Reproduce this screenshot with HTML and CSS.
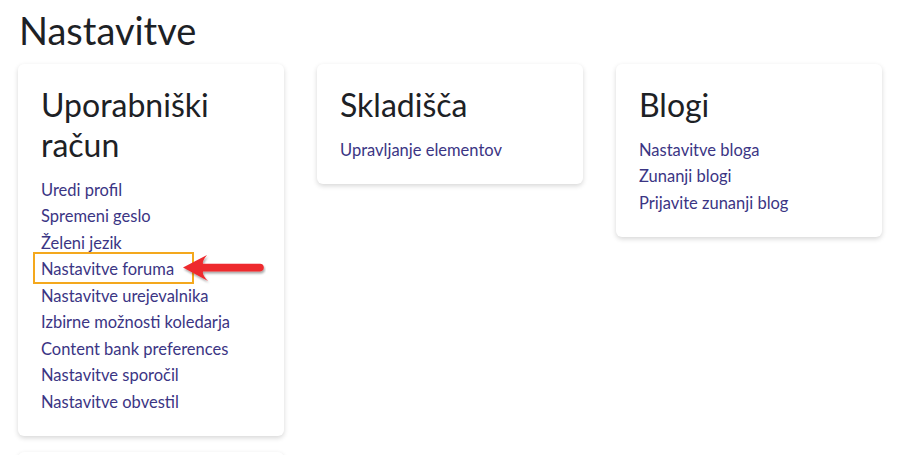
FILE: index.html
```html
<!DOCTYPE html>
<html lang="sl">
<head>
    <meta charset="UTF-8">
    <meta name="viewport" content="width=device-width, initial-scale=1.0">
    <title>Nastavitve</title>
    <link rel="stylesheet" href="styles.css">
</head>
<body>
    <h1 class="page-title">Nastavitve</h1>

    <div class="card-grid">
        <div class="card">
            <h3>Uporabniški račun</h3>
            <ul class="links">
                <li><a href="#">Uredi profil</a></li>
                <li><a href="#">Spremeni geslo</a></li>
                <li><a href="#">Želeni jezik</a></li>
                <li class="marked">
                    <a href="#">Nastavitve foruma</a>
                    <span class="mark-box"></span>
                    <svg class="mark-arrow" width="84" height="32" viewBox="0 0 84 32">
                        <defs>
                            <filter id="arrow-shadow" x="-10%" y="-30%" width="130%" height="180%">
                                <feDropShadow dx="1" dy="2" stdDeviation="1.2" flood-color="#000" flood-opacity="0.35"/>
                            </filter>
                        </defs>
                        <path d="M1 14.5 L25 2 Q20 8 21 10.8 L78 10.8 A3.8 3.8 0 0 1 78 18.4 L21 18.4 Q20 22 26 28 Z" fill="#ee2a2e" filter="url(#arrow-shadow)"/>
                    </svg>
                </li>
                <li><a href="#">Nastavitve urejevalnika</a></li>
                <li><a href="#">Izbirne možnosti koledarja</a></li>
                <li><a href="#">Content bank preferences</a></li>
                <li><a href="#">Nastavitve sporočil</a></li>
                <li><a href="#">Nastavitve obvestil</a></li>
            </ul>
        </div>

        <div class="card">
            <h3>Skladišča</h3>
            <ul class="links">
                <li><a href="#">Upravljanje elementov</a></li>
            </ul>
        </div>

        <div class="card">
            <h3>Blogi</h3>
            <ul class="links">
                <li><a href="#">Nastavitve bloga</a></li>
                <li><a href="#">Zunanji blogi</a></li>
                <li><a href="#">Prijavite zunanji blog</a></li>
            </ul>
        </div>

        <!-- naslednja kartica, vidi se samo zgornji rob -->
        <div class="card card-next"></div>
    </div>
</body>
</html>
```

FILE: styles.css
```css
body {
    font-family: Lato, "Liberation Sans", sans-serif;
    background-color: #fff;
    color: #1d2125;
    margin: 0;
    padding: 8px 18px;
}

.page-title {
    font-size: 38px;
    font-weight: 400;
    line-height: 1.2;
    margin: 0 0 10px 1px;
}

.card-grid {
    display: grid;
    grid-template-columns: repeat(3, 266px);
    column-gap: 33px;
    row-gap: 16px;
    align-items: start;
}

.card {
    background: #fff;
    border-radius: 6px;
    box-shadow: 0 2px 5px rgba(0, 0, 0, 0.16);
    padding: 21px 22px 21px 23px;
}

.card h3 {
    font-size: 32px;
    font-weight: 400;
    line-height: 40px;
    margin: 0 0 12px 0;
}

.card-next {
    height: 60px;
}

.links {
    list-style: none;
    margin: 0;
    padding: 0;
}

.links li {
    font-size: 16.5px;
    line-height: 26.5px;
}

.links a {
    color: #3b3584;
    text-decoration: none;
}

.marked {
    position: relative;
}

.mark-box {
    position: absolute;
    left: -8px;
    top: -4px;
    width: 157px;
    height: 28px;
    border: 2px solid #f4a81d;
}

.mark-arrow {
    position: absolute;
    left: 141px;
    top: -3px;
}
```
